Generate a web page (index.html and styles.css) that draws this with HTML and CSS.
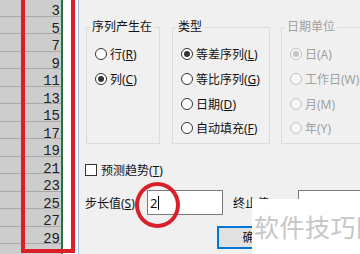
FILE: index.html
```html
<!DOCTYPE html>
<html lang="zh-CN">
<head>
    <meta charset="UTF-8">
    <meta name="viewport" content="width=device-width, initial-scale=1.0">
    <title>序列</title>
    <link rel="stylesheet" href="styles.css">
</head>
<body>

    <div class="page">
        <div class="sheet">
            <div class="sel-col">
                <div class="cell">3</div>
                <div class="cell">5</div>
                <div class="cell">7</div>
                <div class="cell">9</div>
                <div class="cell">11</div>
                <div class="cell">13</div>
                <div class="cell">15</div>
                <div class="cell">17</div>
                <div class="cell">19</div>
                <div class="cell">21</div>
                <div class="cell">23</div>
                <div class="cell">25</div>
                <div class="cell">27</div>
                <div class="cell">29</div>
                <div class="cell"></div>
            </div>
            <div class="next-col"></div>
        </div>

        <div class="dialog">
            <div class="groups">
                <fieldset class="group g-rows">
                    <legend>序列产生在</legend>
                    <div class="opt"><span class="radio"></span><span>行(<u>R</u>)</span></div>
                    <div class="opt"><span class="radio on"></span><span>列(<u>C</u>)</span></div>
                </fieldset>
                <fieldset class="group g-type">
                    <legend>类型</legend>
                    <div class="opt"><span class="radio on"></span><span>等差序列(<u>L</u>)</span></div>
                    <div class="opt"><span class="radio"></span><span>等比序列(<u>G</u>)</span></div>
                    <div class="opt"><span class="radio"></span><span>日期(<u>D</u>)</span></div>
                    <div class="opt"><span class="radio"></span><span>自动填充(<u>F</u>)</span></div>
                </fieldset>
                <fieldset class="group g-unit disabled">
                    <legend>日期单位</legend>
                    <div class="opt"><span class="radio on"></span><span>日(A)</span></div>
                    <div class="opt"><span class="radio"></span><span>工作日(W)</span></div>
                    <div class="opt"><span class="radio"></span><span>月(M)</span></div>
                    <div class="opt"><span class="radio"></span><span>年(Y)</span></div>
                </fieldset>
            </div>

            <div class="check-row"><span class="checkbox"></span><span>预测趋势(<u>T</u>)</span></div>

            <div class="field-row">
                <span class="field-label">步长值(<u>S</u>)</span>
                <div class="input step-input"><span>2</span><span class="caret"></span></div>
                <span class="field-label stop-label">终止值(<u>O</u>)</span>
                <div class="input stop-input"></div>
            </div>

            <div class="buttons">
                <div class="btn default">确定</div>
            </div>
        </div>

        <!-- annotations on top of the screenshot -->
        <div class="mark-box"></div>
        <div class="mark-ellipse"></div>
        <div class="watermark">软件技巧网</div>
    </div>

</body>
</html>
```

FILE: styles.css
```css
* {
    margin: 0;
    padding: 0;
    box-sizing: border-box;
}

body {
    width: 360px;
    height: 254px;
    overflow: hidden;
    background-color: #ffffff;
    font-family: "Noto Sans", "Noto Sans CJK SC", sans-serif;
    font-size: 12px;
    color: #111111;
}

.page {
    position: relative;
    display: flex;
    height: 254px;
    overflow: hidden;
}

/* spreadsheet strip */
.sheet {
    display: flex;
    width: 78px;
    flex-shrink: 0;
    background-color: #ffffff;
}

.sel-col {
    width: 63px;
    margin-top: -1px;
    background-color: #cdcdcd;
    border-right: 2px solid #217346;
}

.cell {
    height: 17.5px;
    padding: 4px 1px 0 0;
    border-bottom: 1px solid #a8a8a8;
    font-family: "Liberation Mono", monospace;
    font-size: 14px;
    line-height: 17.5px;
    text-align: right;
    color: #222222;
}

.next-col {
    flex: 1;
}

/* dialog */
.dialog {
    flex: 1;
    background-color: #f0f0f0;
    border-left: 1px solid #a9c2e0;
    padding: 19px 0 0 7px;
    overflow: hidden;
}

.groups {
    display: flex;
    gap: 12px;
    width: 400px;
}

.group {
    height: 125px;
    margin: 0;
    padding: 7px 0 0 3px;
    border: 1px solid #dcdcdc;
    min-width: 0;
}

.g-rows {
    width: 74px;
}

.g-type {
    width: 98px;
}

.g-unit {
    width: 110px;
    margin-left: -1px;
}

.group legend {
    padding: 0 2px;
    line-height: 16px;
}

.opt {
    display: flex;
    align-items: center;
    gap: 3px;
    height: 24.7px;
    margin-left: 5px;
    white-space: nowrap;
}

.radio {
    display: grid;
    place-items: center;
    width: 12px;
    height: 12px;
    border: 1px solid #333333;
    border-radius: 50%;
    background-color: #ffffff;
}

.radio.on::after {
    content: "";
    width: 6px;
    height: 6px;
    border-radius: 50%;
    background-color: #333333;
}

.disabled {
    color: #a0a0a0;
}

.disabled .radio {
    border-color: #c2c2c2;
    background-color: #f6f6f6;
}

.disabled .radio.on::after {
    background-color: #c2c2c2;
}

.check-row {
    display: flex;
    align-items: center;
    gap: 4px;
    height: 12px;
    margin: 20px 0 0 -1px;
}

.checkbox {
    width: 12px;
    height: 12px;
    border: 1px solid #333333;
    background-color: #ffffff;
}

.field-row {
    display: flex;
    align-items: center;
    height: 25px;
    margin: 14px 0 0 -1px;
    width: 400px;
}

.field-label {
    width: 62px;
}

.stop-label {
    width: 65px;
    margin-left: 10px;
}

.input {
    display: flex;
    align-items: center;
    height: 25px;
    background-color: #ffffff;
    border: 1px solid #7a7a7a;
    padding-left: 2px;
    font-size: 13px;
}

.step-input {
    width: 76px;
}

.stop-input {
    width: 90px;
}

.caret {
    width: 1px;
    height: 14px;
    margin-left: 1px;
    background-color: #000000;
}

.buttons {
    display: flex;
    margin: 11px 0 0 131px;
}

.btn {
    width: 75px;
    height: 23px;
    background-color: #e1e1e1;
    border: 1px solid #adadad;
    text-align: center;
    line-height: 21px;
}

.btn.default {
    border: 2px solid #0078d7;
    line-height: 19px;
}

/* red marks and watermark */
.mark-box {
    position: absolute;
    left: 21px;
    top: -10px;
    width: 54px;
    height: 263px;
    border: 4px solid #dc1f27;
}

.mark-ellipse {
    position: absolute;
    left: 135px;
    top: 182px;
    width: 45px;
    height: 46px;
    border: 4px solid #d8202a;
    border-radius: 50%;
}

.watermark {
    position: absolute;
    left: 252px;
    top: 199px;
    right: 0;
    bottom: 0;
    padding-left: 2px;
    background-color: #ffffff;
    color: #c6c6c6;
    font-family: "Noto Sans CJK SC", sans-serif;
    font-size: 25px;
    letter-spacing: 0.5px;
    line-height: 55px;
    white-space: nowrap;
    overflow: hidden;
}
```
